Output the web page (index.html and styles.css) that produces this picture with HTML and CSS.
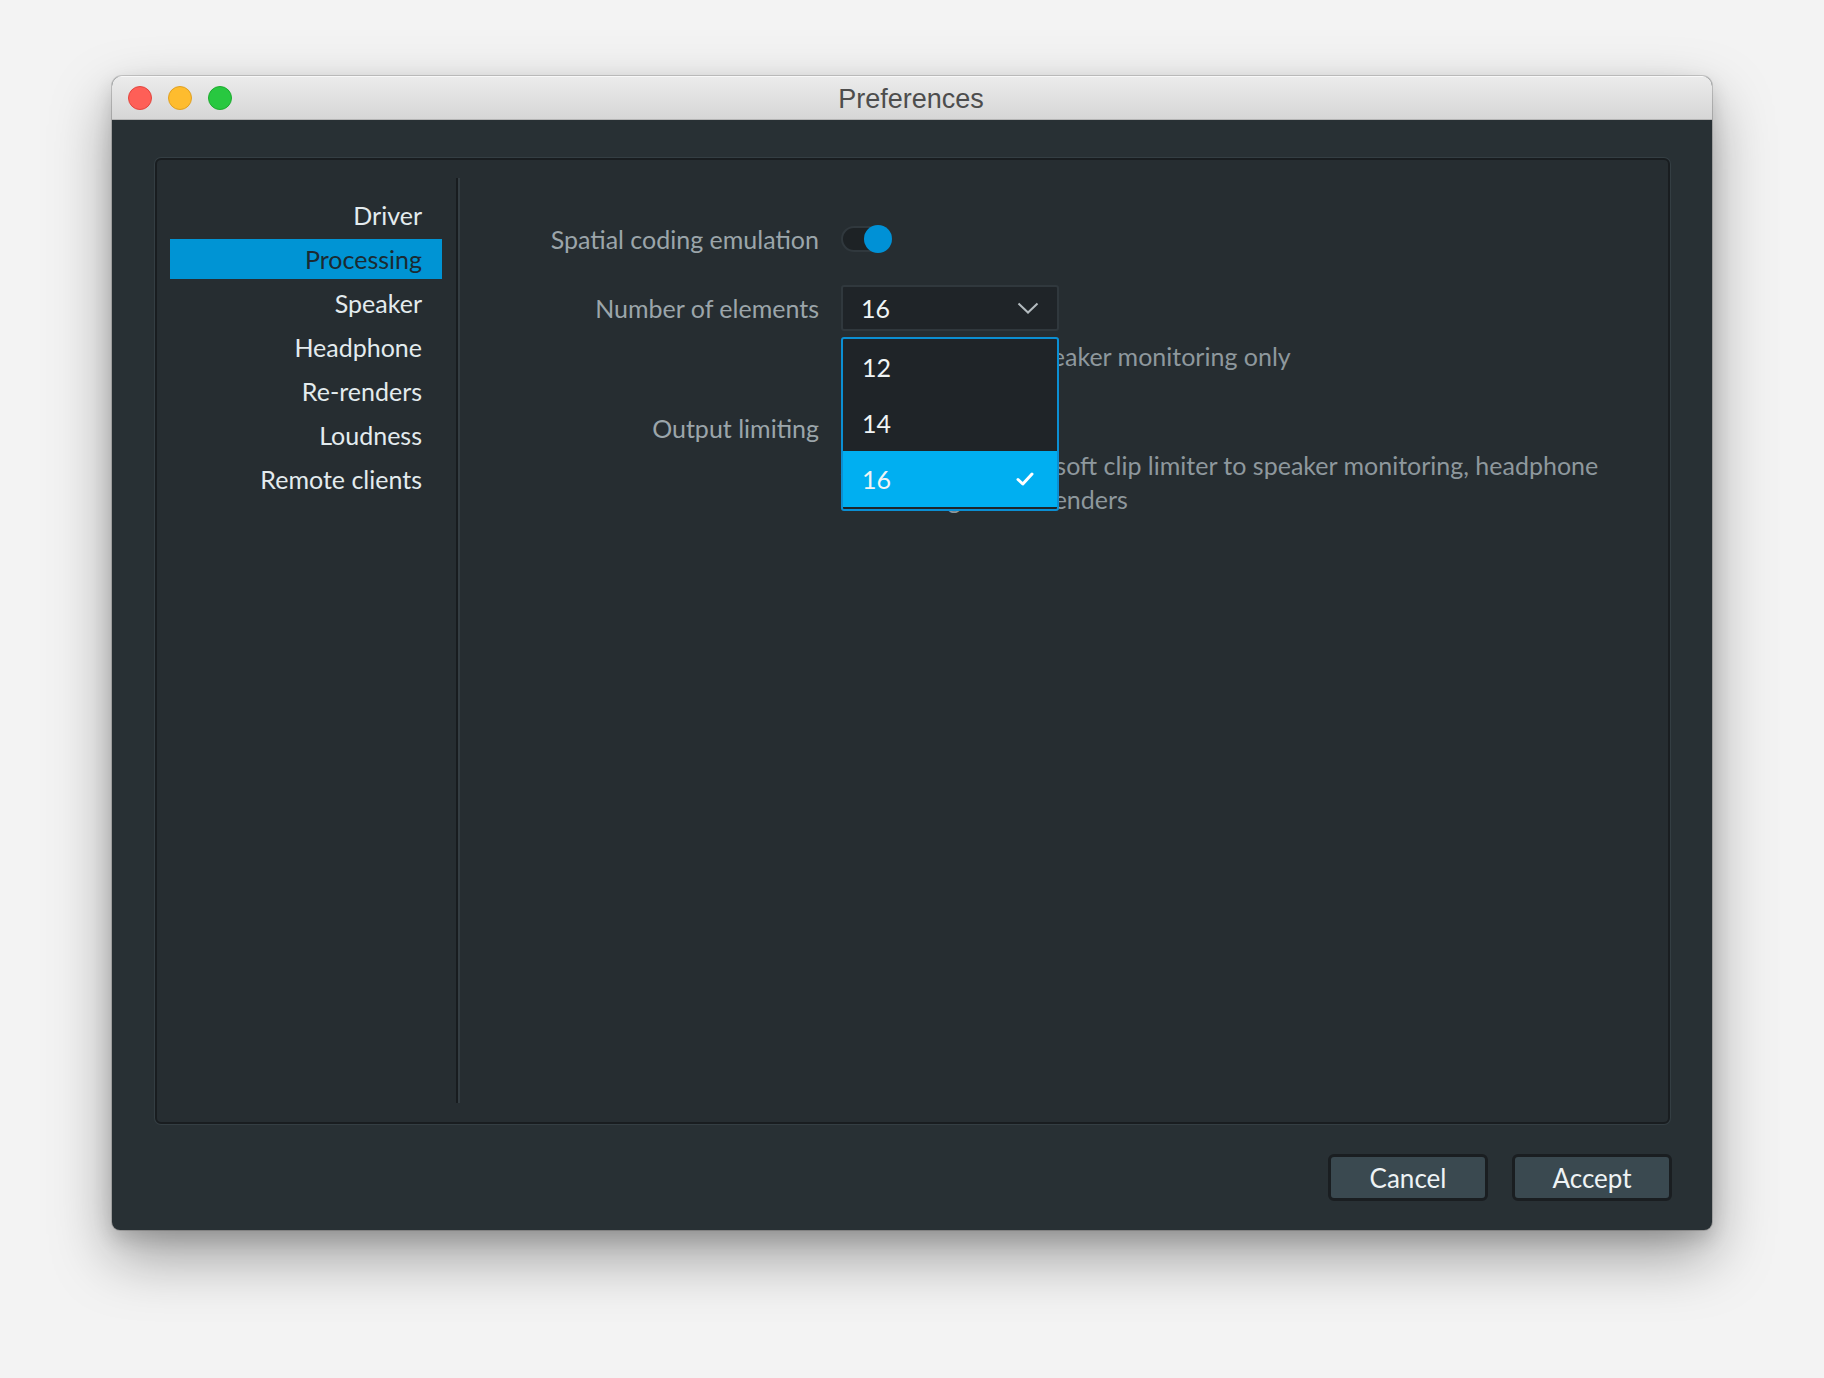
FILE: index.html
```html
<!DOCTYPE html>
<html lang="en">
<head>
<meta charset="utf-8">
<title>Preferences</title>
<link rel="stylesheet" href="styles.css">
</head>
<body>
<div class="window">
  <header class="titlebar">
    <div class="lights">
      <span class="light light-red"></span>
      <span class="light light-yellow"></span>
      <span class="light light-green"></span>
    </div>
    <div class="title">Preferences</div>
    <div></div>
  </header>
  <main class="main">
    <div class="panel">
      <nav class="sidebar">
        <div class="nav-item">Driver</div>
        <div class="nav-item active">Processing</div>
        <div class="nav-item">Speaker</div>
        <div class="nav-item">Headphone</div>
        <div class="nav-item">Re-renders</div>
        <div class="nav-item">Loudness</div>
        <div class="nav-item">Remote clients</div>
      </nav>
      <div class="sep"></div>
      <section class="content">
        <div class="field field-toggle">
          <div class="label">Spatial coding emulation</div>
          <div class="toggle on"><span class="knob"></span></div>
        </div>
        <div class="field field-combo">
          <div class="label">Number of elements</div>
          <div class="combo">
            <span>16</span>
            <svg class="chevron" width="22" height="12" viewBox="0 0 22 12"><polyline points="1.5,1.5 11,10.5 20.5,1.5" fill="none" stroke="#b3bbbf" stroke-width="2"/></svg>
            <div class="popup">
              <div class="opt">12</div>
              <div class="opt">14</div>
              <div class="opt selected"><span>16</span>
                <svg width="18" height="14" viewBox="0 0 18 14"><path d="M2 7.5 L6.8 12 L16 2" fill="none" stroke="#ffffff" stroke-width="3" stroke-linecap="round" stroke-linejoin="round"/></svg>
              </div>
            </div>
          </div>
        </div>
        <div class="field field-check">
          <div></div>
          <div class="checkrow"><span class="checkbox"></span><span class="checktext">Apply to speaker monitoring only</span></div>
        </div>
        <div class="field field-limit">
          <div class="label">Output limiting</div>
          <div class="toggle"><span class="knob"></span></div>
        </div>
        <div class="field desc-row">
          <div></div>
          <p class="desc">Applies a selective, soft clip limiter to speaker monitoring, headphone monitoring and re-renders</p>
        </div>
      </section>
    </div>
    <div class="actions">
      <button class="btn">Cancel</button>
      <button class="btn">Accept</button>
    </div>
  </main>
</div>
</body>
</html>
```
FILE: styles.css
```css
* { box-sizing: border-box; }
html, body { margin: 0; }
body {
  background: #f3f3f3;
  padding: 76px 0 0 112px;
  height: 1378px;
  overflow: hidden;
  font-family: Lato, "Open Sans", sans-serif;
}
.window {
  width: 1600px;
  height: 1154px;
  border-radius: 10px 10px 8px 8px;
  background: #283034;
  box-shadow: 0 0 0 1px rgba(0,0,0,0.16), 0 26px 60px rgba(0,0,0,0.36), 0 8px 20px rgba(0,0,0,0.14);
  overflow: hidden;
  display: flex;
  flex-direction: column;
}
.titlebar {
  height: 44px;
  flex: none;
  display: grid;
  grid-template-columns: 1fr auto 1fr;
  align-items: center;
  background: linear-gradient(#ececec, #d6d6d6);
  border-bottom: 1px solid #b5b5b5;
  box-shadow: inset 0 1px 0 #f8f8f8;
}
.lights { display: flex; gap: 16px; padding-left: 16px; padding-top: 1px; }
.light { width: 24px; height: 24px; border-radius: 50%; }
.light-red { background: #fe5f57; border: 1px solid #e2463f; }
.light-yellow { background: #febc2e; border: 1px solid #dfa023; }
.light-green { background: #28c840; border: 1px solid #1eab2f; }
.title {
  font-family: "Liberation Sans", Arial, sans-serif;
  font-size: 27px;
  color: #4d4d4d;
  padding-top: 3px;
  padding-right: 2px;
}
.main {
  flex: 1;
  display: flex;
  flex-direction: column;
  padding: 38px 42px 29px 43px;
}
.panel {
  height: 966px;
  flex: none;
  border: 2px solid #191d20;
  border-radius: 6px;
  box-shadow: 0 0 0 1px #343e43;
  background: #262d31;
  display: flex;
}
.sidebar { width: 299px; flex: none; padding: 35px 14px 0 13px; }
.nav-item {
  height: 40px;
  margin-bottom: 4px;
  line-height: 40px;
  text-align: right;
  padding-right: 20px;
  font-size: 25px;
  color: #e3ebee;
}
.nav-item.active { background: #0094d4; color: #1b2a31; }
.sep {
  width: 4px;
  flex: none;
  margin: 18px 0 19px;
  border-left: 2px solid #181c1f;
  background: #343d42;
}
.content { flex: 1; padding: 60px 0 0 40px; }
.field {
  display: grid;
  grid-template-columns: 319px 1fr;
  column-gap: 22px;
  align-items: center;
}
.label { text-align: right; font-size: 25px; color: #9ba5aa; white-space: nowrap; }
.field-toggle { height: 38px; }
.field-combo { height: 46px; margin-top: 27px; }
.field-check { height: 50px; }
.field-limit { height: 36px; margin-top: 29px; }
.desc-row { margin-top: 2px; align-items: start; }
.desc {
  margin: 0;
  width: 790px;
  font-size: 25px;
  line-height: 34px;
  color: #8e989d;
}
.toggle {
  position: relative;
  width: 47px;
  height: 26px;
  border-radius: 13px;
  background: #1d2225;
  border: 2px solid #30383d;
}
.toggle .knob {
  position: absolute;
  width: 26px;
  height: 26px;
  border-radius: 50%;
  background: #5a646a;
  left: -1px;
  top: -2px;
}
.toggle.on .knob {
  width: 28px;
  height: 28px;
  left: auto;
  top: -3px;
  right: -6px;
  background: #0091d6;
}
.combo {
  position: relative;
  width: 218px;
  height: 46px;
  background: #1f2428;
  border: 2px solid #30383d;
  border-radius: 3px;
  display: flex;
  align-items: center;
  justify-content: space-between;
  padding: 0 18px;
  font-size: 25px;
  color: #f0f4f5;
}
.popup {
  position: absolute;
  top: calc(100% + 8px);
  left: -2px;
  width: 218px;
  border: 2px solid #0b8fd3;
  border-radius: 3px;
  background: #1f2428;
  padding-bottom: 2px;
  z-index: 5;
}
.opt {
  height: 56px;
  display: flex;
  align-items: center;
  justify-content: space-between;
  padding: 0 23px 0 19px;
  font-size: 25px;
  color: #f0f4f5;
}
.opt.selected { background: #00aff1; }
.checkrow {
  display: flex;
  align-items: center;
  gap: 14px;
  font-size: 25px;
  color: #8e989d;
  white-space: nowrap;
}
.checkbox {
  width: 24px;
  height: 24px;
  border: 2px solid #30383d;
  background: #1d2225;
  border-radius: 3px;
  flex: none;
}
.checktext { margin-left: 49px; }
.actions {
  display: flex;
  justify-content: flex-end;
  gap: 24px;
  margin-top: 30px;
  margin-right: -2px;
}
.btn {
  width: 160px;
  height: 47px;
  border: 3px solid #1a1e21;
  background: #3a4950;
  border-radius: 6px;
  font-family: Lato, sans-serif;
  font-size: 26px;
  color: #eef3f5;
  padding: 0;
}
```
